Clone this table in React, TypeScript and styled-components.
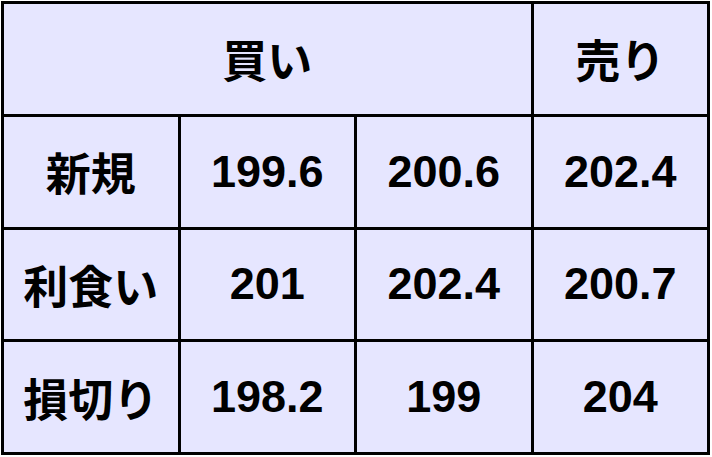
import React from "react";
import styled, { createGlobalStyle } from "styled-components";

const Global = createGlobalStyle`
  html, body { margin: 0; padding: 0; background: #ffffff; }
  body { font-family: "Liberation Sans", "Noto Sans CJK JP", sans-serif; }
`;

const Table = styled.table`
  border-collapse: collapse;
  table-layout: fixed;
  width: 709px;
  height: 454px;
  margin: 1px 0 0 1px;
  background: #e6e6ff;
`;

const Col = styled.col`
  width: 25%;
`;

const Row = styled.tr`
  height: 25%;
`;

const Cell = styled.td`
  border: 3px solid #000;
  text-align: center;
  vertical-align: middle;
  font-family: "Liberation Sans", "Noto Sans CJK JP", sans-serif;
  font-weight: bold;
  font-size: 45px;
  color: #000;
  padding: 0;
`;

const rows: [string, string, string, string][] = [
  ["新規", "199.6", "200.6", "202.4"],
  ["利食い", "201", "202.4", "200.7"],
  ["損切り", "198.2", "199", "204"],
];

export default function App() {
  return (
    <>
      <Global />
      <Table>
        <colgroup>
          <Col />
          <Col />
          <Col />
          <Col />
        </colgroup>
        <tbody>
          <Row>
            <Cell colSpan={3}>買い</Cell>
            <Cell>売り</Cell>
          </Row>
          {rows.map((r) => (
            <Row key={r[0]}>
              {r.map((c, i) => (
                <Cell key={i}>{c}</Cell>
              ))}
            </Row>
          ))}
        </tbody>
      </Table>
    </>
  );
}
